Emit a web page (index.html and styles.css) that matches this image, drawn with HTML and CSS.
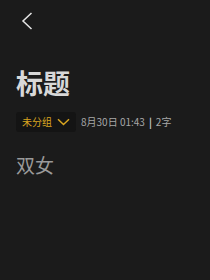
FILE: index.html
```html
<!DOCTYPE html>
<html lang="zh">
<head>
<meta charset="utf-8">
<link rel="stylesheet" href="styles.css">
</head>
<body>
<div class="page">
  <div class="topbar">
    <svg class="back" width="12" height="18" viewBox="0 0 12 18"><path d="M10.5 1 L2 9 L10.5 17" fill="none" stroke="#e6e6e6" stroke-width="1.5"/></svg>
  </div>
  <h1 class="title">标题</h1>
  <div class="meta">
    <div class="group">
      <span>未分组</span>
      <svg width="13" height="8" viewBox="0 0 13 8"><path d="M1 1.2 L6.5 6.5 L12 1.2" fill="none" stroke="#d9a520" stroke-width="1.5"/></svg>
    </div>
    <span class="date">8月30日 01:43</span>
    <span class="sep">|</span>
    <span class="count">2字</span>
  </div>
  <p class="body">双女</p>
</div>
</body>
</html>
```
FILE: styles.css
```css
html, body {
  margin: 0;
  padding: 0;
  background: #1b1b1b;
  width: 210px;
  height: 280px;
  overflow: hidden;
  font-family: "Noto Sans CJK SC", "Noto Sans", sans-serif;
}
.page {
  padding: 0 16px;
}
.topbar {
  height: 42px;
  display: flex;
  align-items: flex-start;
  padding-top: 12px;
  box-sizing: border-box;
  padding-left: 5px;
}
.back {
  display: block;
}
.title {
  margin: 22px 0 0 0;
  font-size: 27px;
  line-height: 38px;
  font-weight: 700;
  color: #d8d8d8;
}
.meta {
  display: flex;
  align-items: center;
  margin-top: 10px;
  font-size: 10px;
  line-height: 14px;
  color: #a8a8a8;
}
.group {
  display: flex;
  align-items: center;
  gap: 5px;
  background: #141414;
  border-radius: 3px;
  padding: 3px 6px;
  margin-right: 5px;
  color: #d9a520;
}
.sep {
  margin: 0 4px;
  font-weight: 700;
  color: #c8c8c8;
}
.body {
  margin: 20px 0 0 0;
  font-size: 19px;
  line-height: 26px;
  color: #9a9a9a;
}
```
